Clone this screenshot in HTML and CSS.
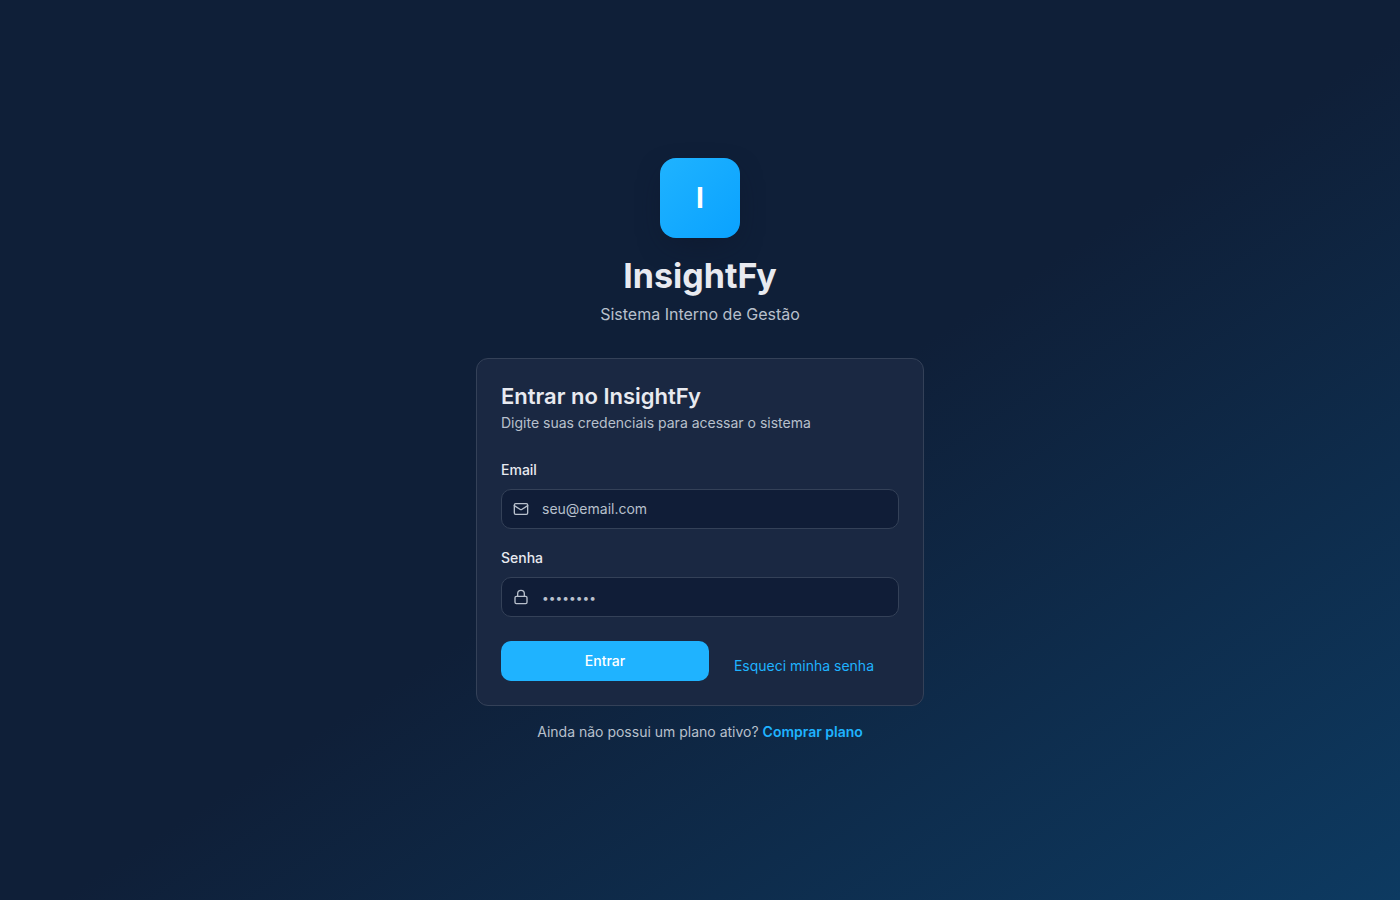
FILE: index.html
```html
<!DOCTYPE html>
<html lang="pt-BR">
<head>
<meta charset="utf-8">
<meta name="viewport" content="width=device-width, initial-scale=1">
<title>InsightFy</title>
<link rel="stylesheet" href="styles.css">
</head>
<body>
<main class="page">
  <div class="login">
    <header class="brand">
      <div class="logo" aria-hidden="true">I</div>
      <h1 class="brand-name">InsightFy</h1>
      <p class="brand-tagline">Sistema Interno de Gestão</p>
    </header>
    <section class="card">
      <div class="card-header">
        <h2 class="card-title">Entrar no InsightFy</h2>
        <p class="card-text">Digite suas credenciais para acessar o sistema</p>
      </div>
      <form class="form">
        <div class="field">
          <label class="label" for="email">Email</label>
          <div class="control">
            <svg class="icon" viewBox="0 0 24 24" aria-hidden="true"><rect width="20" height="16" x="2" y="4" rx="2"/><path d="m22 7-8.97 5.7a1.94 1.94 0 0 1-2.06 0L2 7"/></svg>
            <input class="input" id="email" type="email" placeholder="seu@email.com">
          </div>
        </div>
        <div class="field">
          <label class="label" for="password">Senha</label>
          <div class="control">
            <svg class="icon" viewBox="0 0 24 24" aria-hidden="true"><rect width="18" height="11" x="3" y="11" rx="2" ry="2"/><path d="M7 11V7a5 5 0 0 1 10 0v4"/></svg>
            <input class="input input-password" id="password" type="password" placeholder="••••••••">
          </div>
        </div>
        <div class="actions">
          <button class="submit" type="submit">Entrar</button>
          <a class="forgot" href="#">Esqueci minha senha</a>
        </div>
      </form>
    </section>
    <p class="signup">Ainda não possui um plano ativo? <a class="signup-link" href="#">Comprar plano</a></p>
  </div>
</main>
</body>
</html>
```
FILE: styles.css
```css
* { box-sizing: border-box; }

body {
  margin: 0;
  background: #0f1f38;
  color: #e8eaf0;
  font: 400 14px/20px Inter, "Liberation Sans", sans-serif;
}

h1, h2, p { margin: 0; }
a { color: #1fb3ff; text-decoration: none; }

.page {
  min-height: 100vh;
  display: flex;
  align-items: center;
  justify-content: center;
  padding: 16px;
  background: linear-gradient(to bottom right, #0f1f38, #0f1f38 52%, #0d3a61);
}

.login { width: 100%; max-width: 448px; }

.brand {
  display: flex;
  flex-direction: column;
  align-items: center;
  margin-bottom: 32px;
  text-align: center;
}

.logo {
  display: grid;
  place-items: center;
  width: 80px;
  height: 80px;
  margin-bottom: 18px;
  border-radius: 16px;
  background: linear-gradient(135deg, #1fb3ff, #0aa2ff);
  box-shadow: 0 10px 30px -10px rgba(15, 23, 42, 0.8);
  color: #fff;
  font-size: 28px;
  line-height: 36px;
  font-weight: 700;
}

.brand-name {
  margin-bottom: 6px;
  font-size: 34px;
  line-height: 40px;
  font-weight: 700;
}

.brand-tagline { color: #b8c0cc; font-size: 16px; line-height: 24px; }

.card {
  padding: 24px;
  border: 1px solid #344158;
  border-radius: 12px;
  background: #1a2842;
}

.card-header { margin-bottom: 24px; }
.card-title { margin-bottom: 4px; font-size: 22px; line-height: 26px; font-weight: 600; }
.card-text, .signup { color: #b8c0cc; }

.form { display: grid; gap: 16px; }
.field { display: grid; gap: 6px; }
.label { line-height: 26px; font-weight: 500; }

.control {
  display: flex;
  align-items: center;
  gap: 13px;
  height: 40px;
  padding: 0 12px 0 11px;
  border: 1px solid #344158;
  border-radius: 10px;
  background: #101d37;
}

.control:focus-within { border-color: #1fb3ff; }

.icon {
  flex: none;
  width: 16px;
  height: 16px;
  fill: none;
  stroke: #b8c0cc;
  stroke-width: 2;
  stroke-linecap: round;
  stroke-linejoin: round;
}

.input {
  flex: 1;
  min-width: 0;
  padding: 0;
  border: 0;
  outline: 0;
  background: none;
  color: inherit;
  font: inherit;
}

.input::placeholder { color: #b8c0cc; opacity: 1; }
.input-password::placeholder { font-size: 12px; }

.actions { display: flex; padding-top: 8px; }

.submit {
  flex: 1;
  height: 40px;
  border: 0;
  border-radius: 10px;
  background: #1fb3ff;
  color: #fff;
  font: inherit;
  font-weight: 500;
}

.forgot { padding: 15px 25px 5px; }

.signup { margin-top: 16px; text-align: center; }
.signup-link { font-weight: 600; }
```
